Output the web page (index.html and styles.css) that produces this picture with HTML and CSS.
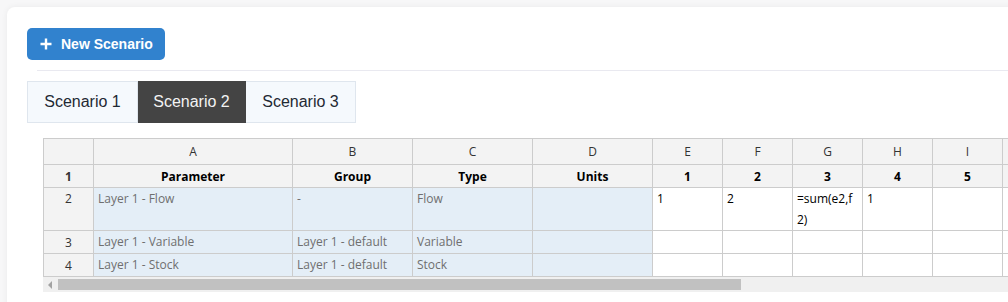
FILE: index.html
```html
<!DOCTYPE html>
<html>
<head>
<meta charset="utf-8">
<link rel="stylesheet" href="styles.css">
</head>
<body>
<div class="card">
  <button class="btn-new"><svg class="plus" width="12" height="12" viewBox="0 0 12 12"><path d="M6 0.5V11.5M0.5 6H11.5" stroke="#fff" stroke-width="2.4" fill="none"/></svg>New Scenario</button>
  <div class="divider"></div>
  <div class="tabs">
    <div class="tab">Scenario 1</div>
    <div class="tab active">Scenario 2</div>
    <div class="tab">Scenario 3</div>
  </div>
  <div class="sheet">
    <table class="grid">
      <colgroup>
        <col class="c-idx"><col class="c-a"><col class="c-m"><col class="c-m"><col class="c-m">
        <col class="c-s"><col class="c-s"><col class="c-s"><col class="c-s"><col class="c-s"><col class="c-s">
      </colgroup>
      <thead>
        <tr><th></th><th>A</th><th>B</th><th>C</th><th>D</th><th>E</th><th>F</th><th>G</th><th>H</th><th>I</th><th></th></tr>
      </thead>
      <tbody>
        <tr class="hdr"><td class="idx">1</td><td>Parameter</td><td>Group</td><td>Type</td><td>Units</td><td>1</td><td>2</td><td>3</td><td>4</td><td>5</td><td></td></tr>
        <tr class="tall"><td class="idx">2</td><td class="ro">Layer 1 - Flow</td><td class="ro">-</td><td class="ro">Flow</td><td class="ro"></td><td>1</td><td>2</td><td>=sum(e2,f2)</td><td>1</td><td></td><td></td></tr>
        <tr><td class="idx">3</td><td class="ro">Layer 1 - Variable</td><td class="ro">Layer 1 - default</td><td class="ro">Variable</td><td class="ro"></td><td></td><td></td><td></td><td></td><td></td><td></td></tr>
        <tr><td class="idx">4</td><td class="ro">Layer 1 - Stock</td><td class="ro">Layer 1 - default</td><td class="ro">Stock</td><td class="ro"></td><td></td><td></td><td></td><td></td><td></td><td></td></tr>
      </tbody>
    </table>
    <div class="scrollbar">
      <span class="arrow"></span>
      <span class="thumb"></span>
    </div>
  </div>
</div>
</body>
</html>
```

FILE: styles.css
```css
html, body {
  margin: 0;
  padding: 0;
  background: #f7f7f8;
  overflow: hidden;
  width: 1008px;
  height: 302px;
}
.card {
  margin: 7px 0 0 7px;
  width: 1040px;
  height: 320px;
  background: #fff;
  border-radius: 8px;
  box-shadow: 0 0 6px rgba(0,0,0,0.06);
  padding: 21px 0 0 20px;
  box-sizing: border-box;
}
.btn-new {
  display: flex;
  align-items: center;
  gap: 9px;
  height: 32px;
  width: 138px;
  padding: 0 0 0 13px;
  background: #3182ce;
  color: #fff;
  border: none;
  border-radius: 5px;
  font-family: "Liberation Sans", Arial, sans-serif;
  font-weight: bold;
  font-size: 14px;
  box-sizing: border-box;
}
.divider {
  margin: 10px 0 0 10px;
  height: 1px;
  background: #e9e9f0;
}
.tabs {
  display: flex;
  margin-top: 10px;
}
.tab {
  height: 42px;
  box-sizing: border-box;
  border: 1px solid #dfe6ee;
  border-left: none;
  background: #f5f9fd;
  color: #1f2933;
  font-family: "Liberation Sans", Arial, sans-serif;
  font-size: 16px;
  display: flex;
  align-items: center;
  justify-content: center;
  width: 110px;
}
.tab:first-child {
  border-left: 1px solid #dfe6ee;
  width: 111px;
}
.tab.active {
  background: #444444;
  color: #f3f3f3;
  border-color: #444444;
  width: 108px;
}
.sheet {
  margin: 15px 0 0 16px;
  width: 1100px;
}
.grid {
  border-collapse: collapse;
  table-layout: fixed;
  width: 1030px;
  font-family: "Open Sans", "Noto Sans", sans-serif;
  font-size: 12px;
  color: #000;
  border-top: 1px solid #cccccc;
  border-left: 1px solid #cccccc;
}
.c-idx { width: 50px; }
.c-a { width: 199px; }
.c-m { width: 120px; }
.c-s { width: 70px; }
.grid th, .grid td {
  border: 1px solid #cccccc;
  padding: 0 4px;
  box-sizing: border-box;
  vertical-align: top;
  line-height: 21px;
  overflow: hidden;
  white-space: normal;
  word-break: break-all;
}
.grid th {
  background: #f3f3f3;
  font-weight: normal;
  color: #333;
  height: 26px;
  vertical-align: middle;
  text-align: center;
}
.grid td {
  height: 23px;
}
.grid td.idx {
  background: #f3f3f3;
  text-align: center;
  color: #333;
  vertical-align: middle;
}
.grid tr.hdr td {
  background: #f3f3f3;
  font-weight: bold;
  text-align: center;
  vertical-align: middle;
}
.grid tr.tall td {
  height: 43px;
}
.grid tr.tall td.idx {
  vertical-align: top;
}
.grid td.ro {
  background: #e4eef7;
  color: #6f6f6f;
}
.scrollbar {
  height: 15px;
  background: #f0f0f0;
  display: flex;
  align-items: center;
  width: 1000px;
}
.arrow {
  width: 0;
  height: 0;
  border-top: 4px solid transparent;
  border-bottom: 4px solid transparent;
  border-right: 4px solid #a3a3a3;
  margin-left: 5px;
}
.thumb {
  margin-left: 6px;
  width: 683px;
  height: 11px;
  background: #c1c1c1;
}
```
